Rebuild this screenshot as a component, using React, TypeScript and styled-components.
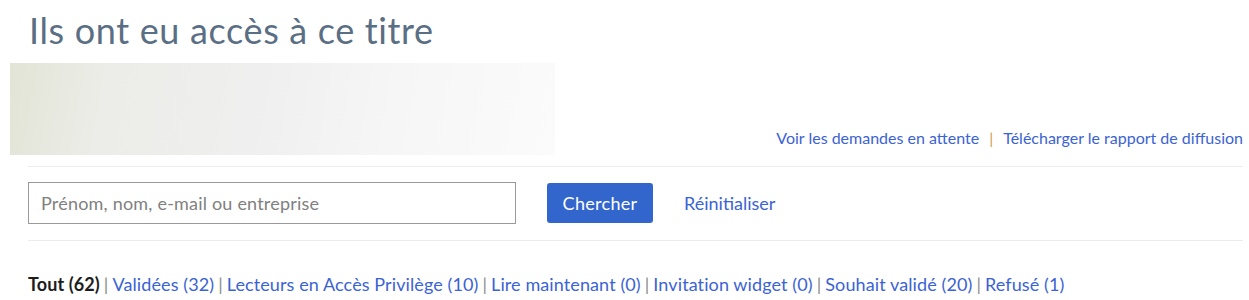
import React from "react";
import styled, { createGlobalStyle } from "styled-components";

const GlobalStyle = createGlobalStyle`
  body {
    margin: 0;
    background: #ffffff;
    font-family: "Lato", "Open Sans", sans-serif;
  }
`;

const Page = styled.div`
  padding: 0 6px 0 10px;
  width: 1249px;
  box-sizing: border-box;
`;

const Title = styled.h1`
  margin: 0;
  padding: 10px 0 0 19px;
  height: 63px;
  box-sizing: border-box;
  font-family: "Lato", sans-serif;
  font-weight: 400;
  font-size: 36px;
  letter-spacing: 0.65px;
  line-height: 40px;
  color: #5a6e84;
`;

const BannerRow = styled.div`
  display: flex;
  justify-content: space-between;
  align-items: flex-end;
`;

const Banner = styled.div`
  width: 545px;
  height: 92px;
  background: linear-gradient(
    100deg,
    #e2e4d6 0%,
    #ecede8 18%,
    #efefef 45%,
    #f6f6f6 70%,
    #fbfbfb 100%
  );
`;

const TopLinks = styled.div`
  display: flex;
  align-items: center;
  gap: 10px;
  padding-bottom: 8px;
  font-size: 16px;
  line-height: 18px;
`;

const Link = styled.a`
  color: #3b63d3;
  text-decoration: none;
  cursor: pointer;
`;

const GoldSep = styled.span`
  color: #c9a04a;
`;

const Divider = styled.div<{ $top: number }>`
  margin: ${(p) => p.$top}px 0 0 18px;
  height: 1px;
  background: #ececec;
`;

const SearchRow = styled.form`
  display: flex;
  align-items: center;
  padding: 15px 0 16px 18px;
`;

const Input = styled.input`
  width: 488px;
  height: 42px;
  box-sizing: border-box;
  border: 1px solid #9a9a9a;
  border-radius: 0;
  padding: 0 12px;
  font-family: "Lato", sans-serif;
  font-size: 18px;
  color: #333;
  outline: none;
  &::placeholder {
    color: #808080;
    letter-spacing: 0.2px;
  }
`;

const SearchButton = styled.button`
  margin-left: 31px;
  width: 106px;
  height: 40px;
  border: none;
  border-radius: 3px;
  background: #3366cc;
  color: #ffffff;
  font-family: "Lato", sans-serif;
  font-size: 18px;
  letter-spacing: 0.3px;
  cursor: pointer;
`;

const ResetLink = styled(Link)`
  margin-left: 31px;
  font-size: 18px;
`;

const Filters = styled.div`
  padding: 32px 0 0 18px;
  font-size: 18px;
  letter-spacing: 0.1px;
  line-height: 22px;
  color: #333;
`;

const Current = styled.strong`
  color: #1d1d1d;
  font-weight: 700;
`;

const Pipe = styled.span`
  color: #8a8a8a;
  margin: 0 4px;
`;

const filters = [
  "Validées (32)",
  "Lecteurs en Accès Privilège (10)",
  "Lire maintenant (0)",
  "Invitation widget (0)",
  "Souhait validé (20)",
  "Refusé (1)",
];

export default function App() {
  return (
    <Page>
      <GlobalStyle />
      <Title>Ils ont eu accès à ce titre</Title>
      <BannerRow>
        <Banner />
        <TopLinks>
          <Link>Voir les demandes en attente</Link>
          <GoldSep>|</GoldSep>
          <Link>Télécharger le rapport de diffusion</Link>
        </TopLinks>
      </BannerRow>
      <Divider $top={11} />
      <SearchRow onSubmit={(e) => e.preventDefault()}>
        <Input placeholder="Prénom, nom, e-mail ou entreprise" />
        <SearchButton type="submit">Chercher</SearchButton>
        <ResetLink>Réinitialiser</ResetLink>
      </SearchRow>
      <Divider $top={0} />
      <Filters>
        <Current>Tout (62)</Current>
        {filters.map((f) => (
          <React.Fragment key={f}>
            <Pipe>|</Pipe>
            <Link>{f}</Link>
          </React.Fragment>
        ))}
      </Filters>
    </Page>
  );
}
